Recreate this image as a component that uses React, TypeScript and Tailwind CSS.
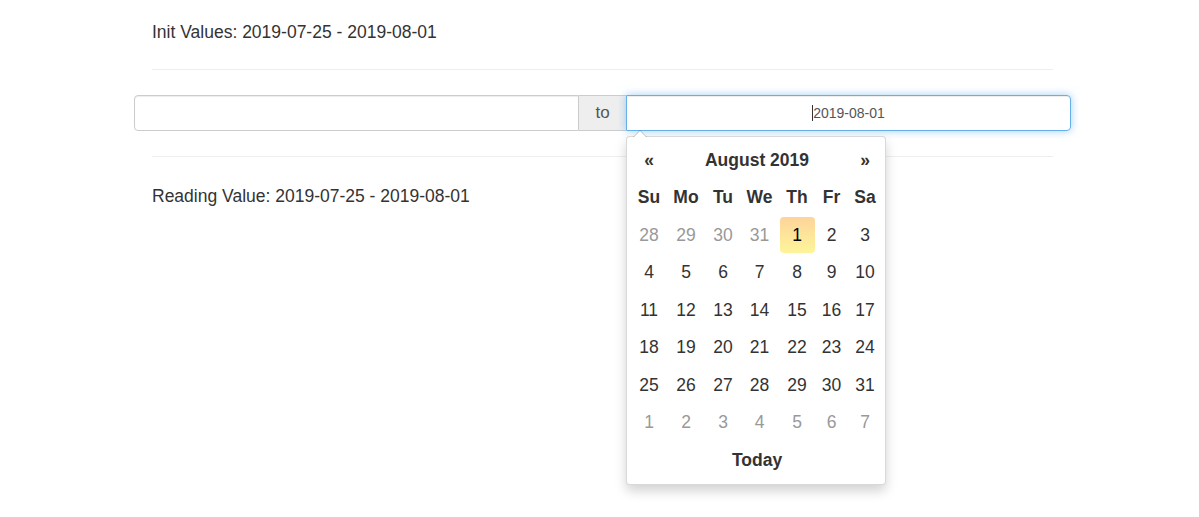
import React from "react";

const days = ["Su", "Mo", "Tu", "We", "Th", "Fr", "Sa"];

type Day = { n: number; muted?: boolean; active?: boolean };

const weeks: Day[][] = [
  [{ n: 28, muted: true }, { n: 29, muted: true }, { n: 30, muted: true }, { n: 31, muted: true }, { n: 1, active: true }, { n: 2 }, { n: 3 }],
  [{ n: 4 }, { n: 5 }, { n: 6 }, { n: 7 }, { n: 8 }, { n: 9 }, { n: 10 }],
  [{ n: 11 }, { n: 12 }, { n: 13 }, { n: 14 }, { n: 15 }, { n: 16 }, { n: 17 }],
  [{ n: 18 }, { n: 19 }, { n: 20 }, { n: 21 }, { n: 22 }, { n: 23 }, { n: 24 }],
  [{ n: 25 }, { n: 26 }, { n: 27 }, { n: 28 }, { n: 29 }, { n: 30 }, { n: 31 }],
  [{ n: 1, muted: true }, { n: 2, muted: true }, { n: 3, muted: true }, { n: 4, muted: true }, { n: 5, muted: true }, { n: 6, muted: true }, { n: 7, muted: true }],
];

function Calendar() {
  return (
    <div className="absolute left-0 top-[41px] z-10 w-[260px] rounded-[4px] border border-[rgba(0,0,0,0.15)] bg-white p-[4px] shadow-[0_6px_12px_rgba(0,0,0,0.175)]">
      {/* arrow */}
      <div className="absolute left-[6px] top-[-7px] h-0 w-0 border-x-[7px] border-b-[7px] border-x-transparent border-b-[rgba(0,0,0,0.2)]" />
      <div className="absolute left-[7px] top-[-6px] h-0 w-0 border-x-[6px] border-b-[6px] border-x-transparent border-b-white" />

      <div className="grid grid-cols-[36px_38px_36px_37px_38px_31px_36px] text-[17.5px] text-[#333]">
        <div className="flex h-[38px] items-center justify-center font-bold">«</div>
        <div className="col-span-5 flex h-[38px] items-center justify-center font-bold">August 2019</div>
        <div className="flex h-[38px] items-center justify-center font-bold">»</div>

        {days.map((d) => (
          <div key={d} className="flex h-[37px] items-center justify-center font-bold">
            {d}
          </div>
        ))}

        {weeks.map((w, i) =>
          w.map((d, j) => (
            <div key={i + "-" + j} className="flex h-[37.5px] items-center justify-center">
              {d.active ? (
                <span className="flex h-[36px] w-[35px] items-center justify-center rounded-[4px] bg-gradient-to-b from-[#fdd49a] to-[#fdf59a] text-black">
                  {d.n}
                </span>
              ) : (
                <span className={d.muted ? "text-[#999]" : ""}>{d.n}</span>
              )}
            </div>
          ))
        )}

        <div className="col-span-7 flex h-[39px] items-center justify-center font-bold">Today</div>
      </div>
    </div>
  );
}

export default function App() {
  return (
    <div className="min-h-[517px] bg-white pl-[134px] pt-[20px] font-['Liberation_Sans',Arial,sans-serif] text-[17.5px] text-[#333]">
      <div className="w-[937px]">
        <p className="px-[18px] leading-[25px]">Init Values: 2019-07-25 - 2019-08-01</p>
        <hr className="mx-[18px] mt-[24px] border-t border-[#eee]" />

        <div className="mt-[25px] flex h-[36px]">
          <div className="w-[445px] rounded-l-[4px] border border-[#ccc] shadow-[inset_0_1px_1px_rgba(0,0,0,0.075)]" />
          <div className="flex w-[47px] items-center justify-center border-y border-[#ccc] bg-[#eee] text-[17px] text-[#555]">
            to
          </div>
          <div className="relative w-[445px]">
            <div className="flex h-full items-center justify-center rounded-r-[4px] border border-[#66afe9] text-[14px] text-[#555] shadow-[inset_0_1px_1px_rgba(0,0,0,0.075),0_0_8px_rgba(102,175,233,0.6)]">
              <span className="border-l border-[#333] leading-[16px]">2019-08-01</span>
            </div>
            <Calendar />
          </div>
        </div>

        <hr className="mx-[18px] mt-[25px] border-t border-[#eee]" />
        <p className="mt-[27px] px-[18px] leading-[25px]">Reading Value: 2019-07-25 - 2019-08-01</p>
      </div>
    </div>
  );
}
